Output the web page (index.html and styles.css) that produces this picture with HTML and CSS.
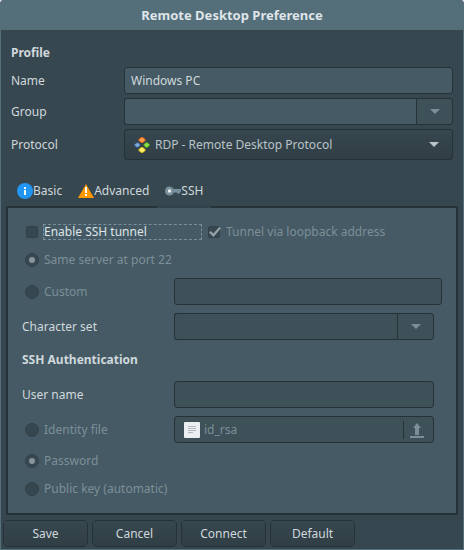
FILE: index.html
```
<!DOCTYPE html>
<html lang="en">
	<head>
		<meta charset="UTF-8">
		<title>Remote Desktop Preference</title>
		<link rel="stylesheet" href="styles.css">
	</head>
	<body>
		<form class="window" action="" method="post">
			<h1 class="titlebar">Remote Desktop Preference</h1>
			<div class="profile">
				<h2 class="heading">Profile</h2>
				<label for="name">Name</label>
				<input class="entry" type="text" id="name" value="Windows PC" />
				<label for="group">Group</label>
				<div class="combo">
					<input class="entry" type="text" id="group" value="" />
					<button class="drop" type="button" aria-label="Show groups"><span class="arrow"></span></button>
				</div>
				<label for="protocol">Protocol</label>
				<div class="protocol">
					<svg class="icon" viewBox="0 0 16 16">
						<path d="M7 .5h2l2 2v1l-2 2H7l-2-2v-1z" fill="#ff9a4a" stroke="#d9621e"/>
						<path d="M3 5.500h1l2 2v1l-2 2H3l-2.500-2v-1z" fill="#7fa9d6" stroke="#30568c"/>
						<path d="M12 5.500h1l2.500 2v1l-2.500 2h-1l-2-2v-1z" fill="#8fe04c" stroke="#4d9a1c"/>
						<path d="M7 10.500h2l2 2v1l-2 2H7l-2-2v-1z" fill="#ffee6a" stroke="#d8b50c"/>
					</svg>
					<select id="protocol"><option>RDP - Remote Desktop Protocol</option></select>
					<span class="arrow"></span>
				</div>
			</div>
			<div class="tabs" role="tablist">
				<button class="tab" type="button" role="tab">
					<svg class="icon" viewBox="0 0 16 16"><circle cx="8" cy="8" r="8" fill="#2196f3"/><path d="M7 4h2v2H7zM7 7h2v5H7z" fill="#fff"/></svg>Basic
				</button>
				<button class="tab" type="button" role="tab">
					<svg class="icon" viewBox="0 0 16 16"><path d="M8 1l8 14H0z" fill="#ff9800"/><path d="M7 4h2v6H7zM7 11h2v2H7z" fill="#fff"/></svg>Advanced
				</button>
				<button class="tab active" type="button" role="tab" aria-selected="true">
					<svg class="icon" viewBox="0 0 16 16"><path d="M4.500 3.500a4.500 4.500 0 1 0 4.300 6H12v1h3V9h1V6H8.600a4.500 4.500 0 0 0-4.100-2.500z" fill="#78909c"/><circle cx="4.500" cy="8" r="1.700" fill="#eceff1"/></svg>SSH
				</button>
			</div>
			<div class="panel" role="tabpanel">
				<div class="row wide">
					<label class="option enable"><input type="checkbox" name="tunnel" /><span class="focus">Enable SSH tunnel</span></label>
					<label class="option off"><input type="checkbox" name="loopback" checked disabled />Tunnel via loopback address</label>
				</div>
				<label class="option wide off"><input type="radio" name="server" checked disabled />Same server at port 22</label>
				<label class="option off"><input type="radio" name="server" disabled />Custom</label>
				<input class="entry custom" type="text" aria-label="Custom server" disabled />
				<label for="charset">Character set</label>
				<div class="combo short">
					<input class="entry" type="text" id="charset" disabled />
					<button class="drop" type="button" aria-label="Show character sets" disabled><span class="arrow"></span></button>
				</div>
				<h2 class="heading">SSH Authentication</h2>
				<label for="user">User name</label>
				<input class="entry short" type="text" id="user" disabled />
				<label class="option off"><input type="radio" name="auth" disabled />Identity file</label>
				<button class="file short" type="button" disabled>
					<svg class="icon" viewBox="0 0 16 16"><rect width="16" height="16" rx="1" fill="#eceff1"/><path d="M4 4.500h8M4 6.500h8M4 8.500h8M4 10.500h5" stroke="#b4b8ba"/></svg>
					<span class="filename">id_rsa</span>
					<svg class="icon upload" viewBox="0 0 16 16"><path d="M8 1l4 5h-2v7H6V6H4zM1 14h14v2H1z" fill="#7c8f98"/></svg>
				</button>
				<label class="option wide off"><input type="radio" name="auth" checked disabled />Password</label>
				<label class="option wide off"><input type="radio" name="auth" disabled />Public key (automatic)</label>
			</div>
			<div class="actions">
				<button type="submit">Save</button>
				<button type="button">Cancel</button>
				<button type="button">Connect</button>
				<button type="button">Default</button>
			</div>
		</form>
	</body>
</html>
```
FILE: styles.css
```
*{
	box-sizing: border-box;
}
body{
	margin: 0;
	background-color: #dfe3e4;
	color: #cfd8dc;
	font: 12px/18px "Noto Sans", sans-serif;
}
input,select,button{
	margin: 0;
	color: inherit;
	font: inherit;
}
.window{
	border: 1px solid #546e7a;
	border-top: none;
	border-radius: 4px 4px 0 0;
	background-color: #37474f;
	overflow: hidden;
}
.titlebar{
	margin: 0;
	background-color: #546e7a;
	color: #dfe5e8;
	font-size: 13px;
	line-height: 30px;
	text-align: center;
}
.heading{
	grid-column: 1 / -1;
	margin: 0;
	font-size: 12px;
	line-height: 18px;
}
.profile{
	display: grid;
	grid-template-columns: 113px 1fr;
	row-gap: 4px;
	align-items: center;
	padding: 14px 10px;
}
.profile .heading{
	padding-bottom: 1px;
}
.entry{
	width: 100%;
	height: 27px;
	padding: 0 6px;
	border: 1px solid #263238;
	border-radius: 3px;
	background-color: #455a64;
}
.entry:disabled{
	background-color: #3e5058;
}
.combo{
	display: flex;
}
.combo .entry{
	flex: 1;
	min-width: 0;
	border-right: none;
	border-radius: 3px 0 0 3px;
}
.drop{
	display: flex;
	align-items: center;
	justify-content: center;
	width: 37px;
	border: 1px solid #263238;
	border-radius: 0 3px 3px 0;
	background-color: #3e5058;
	color: #7c8f98;
}
.arrow{
	border: 5px solid transparent;
	border-top-color: currentColor;
	border-bottom: none;
}
.icon{
	flex: none;
	width: 16px;
	height: 16px;
}
.protocol{
	display: flex;
	align-items: center;
	height: 31px;
	padding: 0 13px 0 9px;
	border: 1px solid #263238;
	border-radius: 3px;
	background-image: linear-gradient(#37474f, #303e45);
	color: #b9c3c8;
}
.protocol select{
	flex: 1;
	padding: 0 5px;
	border: none;
	background: none;
	appearance: none;
}
.tabs{
	display: flex;
	height: 34px;
	margin: 0 8px -2px;
}
.tab{
	display: flex;
	align-items: center;
	padding: 2px 8px 0;
	border: none;
	border-bottom: 3px solid transparent;
	background: none;
}
.tab.active{
	position: relative;
	border-color: #32434b;
}
.panel{
	display: grid;
	grid-template-columns: 152px 1fr;
	align-items: center;
	margin: 0 5px;
	padding: 10px 14px;
	border: 2px solid #263238;
	background-color: #455a64;
}
.wide{
	grid-column: 1 / -1;
}
.row{
	display: flex;
}
.option{
	display: flex;
	align-items: center;
	height: 28px;
}
.option input{
	flex: none;
	display: grid;
	place-items: center;
	appearance: none;
	width: 14px;
	height: 14px;
	margin: 0 5px 0 3px;
	border: 1px solid #33424a;
	border-radius: 50%;
	background-color: #37474f;
}
.option input[type="checkbox"]{
	width: 12px;
	height: 12px;
	margin: 0 6px 0 4px;
	border-radius: 2px;
}
.option input[type="radio"]:checked::before{
	content: "";
	width: 6px;
	height: 6px;
	border-radius: 50%;
	background-color: #87949a;
}
.option input[type="checkbox"]:checked::before{
	content: "";
	width: 12px;
	height: 10px;
	background-color: #93a0a6;
	clip-path: polygon(0 55%, 15% 40%, 36% 65%, 85% 0, 100% 12%, 38% 100%);
}
.enable{
	width: 182px;
	color: #dfe5e8;
}
.focus{
	flex: 1;
	margin-right: 3px;
	line-height: 14px;
	outline: 1px dashed #78909c;
}
.off,.file{
	color: #7c8f98;
}
.custom{
	margin: 4px 0 8px;
}
.panel .option:has(+ .custom){
	margin-bottom: 3px;
}
.short{
	width: auto;
	margin-right: 8px;
}
.panel .heading{
	padding: 11px 0 12px;
}
.file{
	display: flex;
	align-items: center;
	height: 27px;
	margin-top: 8px;
	margin-bottom: 4px;
	padding: 0 8px 0 9px;
	border: 1px solid #263238;
	border-radius: 3px;
	background-color: #3e5058;
}
.panel .option:has(+ .file){
	margin-top: 4px;
}
.filename{
	flex: 1;
	padding-left: 4px;
	border-right: 1px solid #263238;
	text-align: left;
}
.upload{
	margin-left: 5px;
}
.actions{
	display: flex;
	gap: 4px;
	padding: 5px 2px 2px;
}
.actions button{
	width: 85px;
	height: 27px;
	padding: 0;
	border: 1px solid #263238;
	border-radius: 3px;
	background-image: linear-gradient(#37474f, #303e45);
}
```
